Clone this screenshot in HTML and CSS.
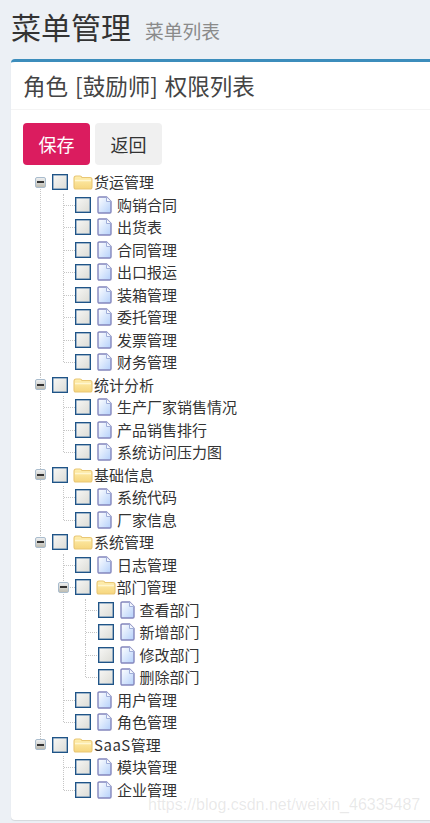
FILE: index.html
```html
<!DOCTYPE html>
<html lang="zh">
<head>
<meta charset="utf-8">
<title>菜单管理</title>
<link rel="stylesheet" href="styles.css">
</head>
<body>
<svg class="defs" width="0" height="0" aria-hidden="true">
  <defs>
    <linearGradient id="fy" x1="0" y1="0" x2="0" y2="1"><stop offset="0" stop-color="#ffefb0"/><stop offset="1" stop-color="#f6d67e"/></linearGradient>
    <linearGradient id="fl" x1="0" y1="0" x2="1" y2="1"><stop offset="0" stop-color="#ffffff"/><stop offset="1" stop-color="#b4d0fa"/></linearGradient>
    <symbol id="folder" viewBox="0 0 20 16">
      <path d="M1 13V4.500C1 3.400 1.800 2 3 2H7C8 2 8.500 2.500 9 3.500H17C18 3.500 19 4.300 19 5.500V13C19 14.200 18.200 15 17 15H3C1.800 15 1 14.200 1 13Z" fill="url(#fy)" stroke="#e9c775" stroke-width="1.100"/>
      <path d="M2 6.500H18" stroke="#fff6cf" stroke-width="1.600"/>
    </symbol>
    <symbol id="file" viewBox="0 0 15 18">
      <path d="M1 2.200C1 1.500 1.500 1 2.200 1H9.500L14 5.500V15.800C14 16.500 13.500 17 12.800 17H2.200C1.500 17 1 16.500 1 15.800Z" fill="url(#fl)" stroke="#8487bd" stroke-width="1.400"/>
      <path d="M9.500 1V5.500H14" fill="#f4f8ff" stroke="#a0aed8" stroke-width="1"/>
    </symbol>
  </defs>
</svg>
<header class="page-head">
  <h1 class="page-title">菜单管理<small class="page-sub">菜单列表</small></h1>
</header>
<main class="box">
  <div class="box-head"><h2 class="box-title">角色 [鼓励师] 权限列表</h2></div>
  <div class="box-body">
    <div class="actions">
      <button class="btn btn-save" type="button">保存</button>
      <button class="btn btn-back" type="button">返回</button>
    </div>
    <ul class="tree">
      <li class="node">
        <div class="row"><span class="switch"></span><span class="check"></span><svg class="i-folder"><use href="#folder"/></svg><span class="label">货运管理</span></div>
        <ul class="sub">
          <li class="leaf"><div class="row"><span class="check"></span><svg class="i-file"><use href="#file"/></svg><span class="label lf">购销合同</span></div></li>
          <li class="leaf"><div class="row"><span class="check"></span><svg class="i-file"><use href="#file"/></svg><span class="label lf">出货表</span></div></li>
          <li class="leaf"><div class="row"><span class="check"></span><svg class="i-file"><use href="#file"/></svg><span class="label lf">合同管理</span></div></li>
          <li class="leaf"><div class="row"><span class="check"></span><svg class="i-file"><use href="#file"/></svg><span class="label lf">出口报运</span></div></li>
          <li class="leaf"><div class="row"><span class="check"></span><svg class="i-file"><use href="#file"/></svg><span class="label lf">装箱管理</span></div></li>
          <li class="leaf"><div class="row"><span class="check"></span><svg class="i-file"><use href="#file"/></svg><span class="label lf">委托管理</span></div></li>
          <li class="leaf"><div class="row"><span class="check"></span><svg class="i-file"><use href="#file"/></svg><span class="label lf">发票管理</span></div></li>
          <li class="leaf"><div class="row"><span class="check"></span><svg class="i-file"><use href="#file"/></svg><span class="label lf">财务管理</span></div></li>
        </ul>
      </li>
      <li class="node">
        <div class="row"><span class="switch"></span><span class="check"></span><svg class="i-folder"><use href="#folder"/></svg><span class="label">统计分析</span></div>
        <ul class="sub">
          <li class="leaf"><div class="row"><span class="check"></span><svg class="i-file"><use href="#file"/></svg><span class="label lf">生产厂家销售情况</span></div></li>
          <li class="leaf"><div class="row"><span class="check"></span><svg class="i-file"><use href="#file"/></svg><span class="label lf">产品销售排行</span></div></li>
          <li class="leaf"><div class="row"><span class="check"></span><svg class="i-file"><use href="#file"/></svg><span class="label lf">系统访问压力图</span></div></li>
        </ul>
      </li>
      <li class="node">
        <div class="row"><span class="switch"></span><span class="check"></span><svg class="i-folder"><use href="#folder"/></svg><span class="label">基础信息</span></div>
        <ul class="sub">
          <li class="leaf"><div class="row"><span class="check"></span><svg class="i-file"><use href="#file"/></svg><span class="label lf">系统代码</span></div></li>
          <li class="leaf"><div class="row"><span class="check"></span><svg class="i-file"><use href="#file"/></svg><span class="label lf">厂家信息</span></div></li>
        </ul>
      </li>
      <li class="node">
        <div class="row"><span class="switch"></span><span class="check"></span><svg class="i-folder"><use href="#folder"/></svg><span class="label">系统管理</span></div>
        <ul class="sub">
          <li class="leaf"><div class="row"><span class="check"></span><svg class="i-file"><use href="#file"/></svg><span class="label lf">日志管理</span></div></li>
          <li class="node">
            <div class="row"><span class="switch"></span><span class="check"></span><svg class="i-folder"><use href="#folder"/></svg><span class="label">部门管理</span></div>
            <ul class="sub">
              <li class="leaf"><div class="row"><span class="check"></span><svg class="i-file"><use href="#file"/></svg><span class="label lf">查看部门</span></div></li>
              <li class="leaf"><div class="row"><span class="check"></span><svg class="i-file"><use href="#file"/></svg><span class="label lf">新增部门</span></div></li>
              <li class="leaf"><div class="row"><span class="check"></span><svg class="i-file"><use href="#file"/></svg><span class="label lf">修改部门</span></div></li>
              <li class="leaf"><div class="row"><span class="check"></span><svg class="i-file"><use href="#file"/></svg><span class="label lf">删除部门</span></div></li>
            </ul>
          </li>
          <li class="leaf"><div class="row"><span class="check"></span><svg class="i-file"><use href="#file"/></svg><span class="label lf">用户管理</span></div></li>
          <li class="leaf"><div class="row"><span class="check"></span><svg class="i-file"><use href="#file"/></svg><span class="label lf">角色管理</span></div></li>
        </ul>
      </li>
      <li class="node">
        <div class="row"><span class="switch"></span><span class="check"></span><svg class="i-folder"><use href="#folder"/></svg><span class="label"><span class="latin">SaaS</span>管理</span></div>
        <ul class="sub">
          <li class="leaf"><div class="row"><span class="check"></span><svg class="i-file"><use href="#file"/></svg><span class="label lf">模块管理</span></div></li>
          <li class="leaf"><div class="row"><span class="check"></span><svg class="i-file"><use href="#file"/></svg><span class="label lf">企业管理</span></div></li>
        </ul>
      </li>
    </ul>
  </div>
</main>
<div class="watermark">https://blog.csdn.net/weixin_46335487</div>
</body>
</html>
```
FILE: styles.css
```css
* { box-sizing: border-box; }
html, body { height: 100%; }
body {
  margin: 0;
  background: #ecf0f5;
  color: #333;
  font-family: "Noto Sans CJK SC", "Liberation Sans", sans-serif;
  overflow: hidden;
  position: relative;
}
ul { list-style: none; margin: 0; padding: 0; }
.defs { display: block; height: 0; }
.page-head { padding: 5px 11px 0; height: 59px; }
.page-title { margin: 0; font-size: 30px; font-weight: 400; line-height: 42px; color: #333; }
.page-sub { margin-left: 14px; font-size: 18.750px; color: #8a8a8a; }
.box {
  margin-left: 11px;
  height: 761px;
  background: #fff;
  border-top: 3.500px solid #3c8dbc;
  border-radius: 4px 0 0 4px;
  box-shadow: 0 1px 1px rgba(0,0,0,.1);
}
.box-head { height: 48px; padding: 0 12px; border-bottom: 1px solid #f4f4f4; display: flex; align-items: center; }
.box-title { margin: 0; font-size: 22.500px; font-weight: 400; word-spacing: 2px; color: #444; line-height: 1.2; }
.box-body { padding: 13px 12px 0; }
.actions { display: flex; gap: 5px; }
.btn { height: 42px; border: 0; border-radius: 4px; font: inherit; font-size: 18px; padding: 0; width: 67px; }
.btn-save { background: #db1c5f; color: #fff; }
.btn-back { background: #f0f0f0; color: #333; }
.tree { margin: 6px 0 0 6px; font-size: 15px; }
.row { height: 22.500px; display: flex; align-items: center; position: relative; }
.sub { padding-left: 22.500px; }
li { position: relative; }
li::before {
  content: "";
  position: absolute;
  left: 11px;
  top: 0;
  bottom: 0;
  border-left: 1px dotted #c6c6c6;
}
.tree > li:first-child::before { top: 11px; }
li:last-child::before { bottom: auto; height: 11px; }
.sub > li > .row::before {
  content: "";
  position: absolute;
  left: 12px;
  top: 11px;
  width: 11px;
  border-top: 1px dotted #c6c6c6;
}
.leaf > .row { padding-left: 23.500px; }
.switch {
  position: relative;
  flex: none;
  width: 11px;
  height: 11px;
  margin-left: 6px;
  margin-right: 6px;
  border: 1px solid #a9bccd;
  border-radius: 2px;
  background: linear-gradient(#eceef0, #bfbdb2);
  z-index: 1;
}
.switch::after {
  content: "";
  position: absolute;
  left: 1px;
  right: 1px;
  top: 3.500px;
  height: 2px;
  background: #333;
}
.check {
  flex: none;
  width: 16px;
  height: 16px;
  border: 1px solid #1f5487;
  box-shadow: inset 0 0 0 .5px #4f7ba5;
  background: linear-gradient(135deg, #f7f7f5, #dcdcd6);
}
.i-folder { flex: none; width: 20px; height: 16px; margin-left: 5px; }
.i-file { flex: none; width: 15px; height: 18px; margin-left: 6px; }
.label { margin-left: 1px; line-height: 22.500px; white-space: nowrap; color: #333; }
.latin { letter-spacing: .5px; }
.lf { margin-left: 5px; }
.watermark {
  position: absolute;
  left: 148px;
  top: 796px;
  font-family: "Liberation Sans", sans-serif;
  font-size: 16px;
  color: rgba(120,120,120,.17);
  white-space: nowrap;
}
```
